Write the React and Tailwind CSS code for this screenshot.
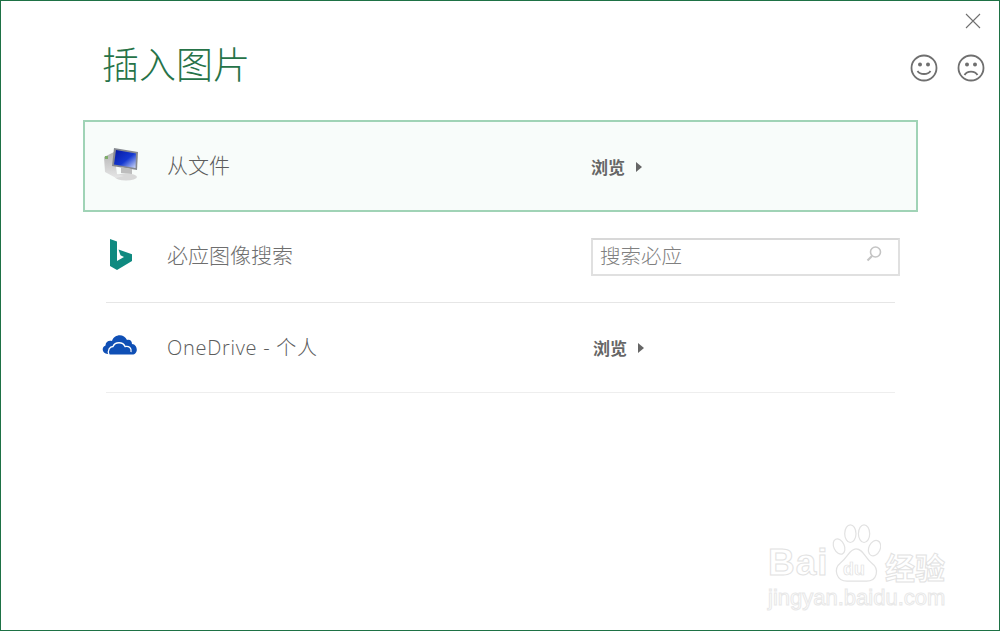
const cjk = { fontFamily: '"Noto Sans CJK SC", sans-serif' };

function PcIcon() {
  return (
    <svg width="38" height="34" viewBox="0 0 38 34" className="shrink-0">
      <defs>
        <linearGradient id="scr" x1="0" y1="0" x2="1" y2="1">
          <stop offset="0" stopColor="#0618a0" />
          <stop offset="0.55" stopColor="#1438d0" />
          <stop offset="1" stopColor="#d5def8" />
        </linearGradient>
        <linearGradient id="tower" x1="0" y1="0" x2="0" y2="1">
          <stop offset="0" stopColor="#b5b5b5" />
          <stop offset="1" stopColor="#e6e6e6" />
        </linearGradient>
      </defs>
      <ellipse cx="23" cy="30" rx="11" ry="3.500" fill="#d8d8d8" />
      <path d="M1 10 L11 5 L14 27 L21 29 L13 31 L2 25 Z" fill="url(#tower)" />
      <path d="M11 1 L35 5 L34 23 L9 19 Z" fill="#85888f" />
      <path d="M13 3 L33 6.500 L32.500 21 L11 17.500 Z" fill="url(#scr)" />
      <path d="M18 20 L29 22 L29 27 L18 26 Z" fill="#bdbdbd" />
      <rect x="2" y="9" width="3" height="3" fill="#7fae6a" />
    </svg>
  );
}

function BingIcon() {
  return (
    <svg width="24" height="33" viewBox="0 0 24 33" className="shrink-0">
      <path d="M1 1 L8 3.500 L8 23 L15 19 L11.500 17.200 L9.500 11.500 L23 16.200 L23 23 L8 32 L1 28 Z" fill="#0f8a80" />
    </svg>
  );
}

function CloudIcon() {
  return (
    <svg width="36" height="23" viewBox="0 0 36 23" className="shrink-0">
      <path d="M7 21 C1 21 0 14 4.500 12.500 C4.500 8.500 8 7 11 8 C13 1 23 0 26 7 C29 6 31 8 31 11 C35 11 36.500 16 35.500 18.500 C34.500 21 33 21.500 31 21.500 L9 21.500 Z" fill="#0f4fb5" />
      <path d="M8 22 C6 17 9 13.500 12 13.500 C14 8.500 22 8.500 24 13.500 C28 12.500 31 15.500 30 19" fill="none" stroke="#fff" strokeWidth="1.300" />
    </svg>
  );
}

function Browse() {
  return (
    <div className="flex items-center gap-[11px]">
      <span className="text-[17px] font-bold text-[#666666]" style={{ fontFamily: '"Noto Sans CJK SC", serif' }}>浏览</span>
      <span className="h-0 w-0 border-y-[5px] border-l-[6px] border-y-transparent border-l-[#666666]" />
    </div>
  );
}

function Watermark() {
  return (
    <div className="pointer-events-none absolute left-[767px] top-[522px] w-[182px] select-none">
      <div className="flex h-[60px] items-end whitespace-nowrap">
        <span className="mb-[2px] w-[63px] text-[37px] font-bold leading-[36px] tracking-[1px] text-white [-webkit-text-stroke:1px_#e2e2e2]" style={{ fontFamily: '"Liberation Sans", sans-serif' }}>Bai</span>
        <svg width="50" height="60" viewBox="0 0 62 74" className="shrink-0">
          <g fill="#fff" stroke="#e2e2e2" strokeWidth="1.500">
            <ellipse cx="10" cy="29" rx="6.500" ry="10" transform="rotate(-25 10 29)" />
            <ellipse cx="24" cy="13" rx="7" ry="11" />
            <ellipse cx="41" cy="13" rx="7" ry="11" />
            <ellipse cx="54" cy="31" rx="7" ry="10" transform="rotate(25 54 31)" />
            <path d="M31 32 C23 32 21 42 12 49 C2 57 7 72 20 72 C28 72 36 72 44 72 C57 72 61 57 50 49 C42 43 40 32 31 32 Z" />
          </g>
          <text x="15" y="64" fontSize="22" fontWeight="700" fontFamily="Liberation Sans" fill="#fff" stroke="#e2e2e2" strokeWidth="0.900">du</text>
        </svg>
        <span className="mb-[1px] ml-[4px] text-[30px] font-bold leading-[32px] text-white [-webkit-text-stroke:1px_#e2e2e2]" style={cjk}>经验</span>
      </div>
      <div className="mt-[3px] text-[22px] leading-[24px] text-white [-webkit-text-stroke:1px_#e8e8e8]" style={{ fontFamily: '"Liberation Sans", sans-serif' }}>jingyan.baidu.com</div>
    </div>
  );
}

export default function App() {
  return (
    <div className="relative h-[631px] w-[1000px] overflow-hidden border border-[#1e7145] bg-white" style={cjk}>
      <div className="flex h-[119px] items-start justify-between">
        <h1 className="ml-[101px] mt-[37px] text-[37px] font-light leading-[50px] text-[#267348]" style={{ fontFamily: '"Noto Sans CJK SC", serif' }}>插入图片</h1>
        <div className="mr-[14px] flex flex-col items-end">
          <svg width="16" height="16" viewBox="0 0 16 16" className="mr-[4px] mt-[12px]">
            <path d="M1 1 L15 15 M15 1 L1 15" stroke="#6f6f6f" strokeWidth="1.100" fill="none" />
          </svg>
          <div className="mt-[25px] flex gap-[19px]">
            <svg width="28" height="28" viewBox="0 0 28 28">
              <circle cx="14" cy="14" r="12.500" fill="none" stroke="#6f6f6f" strokeWidth="1.800" />
              <circle cx="10" cy="10.500" r="2" fill="#6f6f6f" />
              <circle cx="18" cy="10.500" r="2" fill="#6f6f6f" />
              <path d="M7.500 17 C10 21 18 21 20.500 17" fill="none" stroke="#6f6f6f" strokeWidth="1.800" />
            </svg>
            <svg width="28" height="28" viewBox="0 0 28 28">
              <circle cx="14" cy="14" r="12.500" fill="none" stroke="#6f6f6f" strokeWidth="1.800" />
              <circle cx="10" cy="10.500" r="2" fill="#6f6f6f" />
              <circle cx="18" cy="10.500" r="2" fill="#6f6f6f" />
              <path d="M7.500 21 C10 16.500 18 16.500 20.500 21" fill="none" stroke="#6f6f6f" strokeWidth="1.800" />
            </svg>
          </div>
        </div>
      </div>

      <div className="ml-[82px] flex h-[92px] w-[835px] items-center border-2 border-[#a0d3b6] bg-[#f8fcfa]">
        <div className="ml-[18px] mb-[4px] flex w-[64px] items-center"><PcIcon /></div>
        <span className="mb-[3px] text-[21px] font-light text-[#5c5c5c]">从文件</span>
        <div className="ml-auto mr-[274px] mt-[1px]"><Browse /></div>
      </div>

      <div className="ml-[105px] w-[789px]">
        <div className="flex h-[91px] items-center border-b border-[#e6e6e6]">
          <div className="ml-[3px] mb-[5px] flex w-[58px] items-center"><BingIcon /></div>
          <span className="mb-[5px] text-[21px] font-light text-[#6e6e6e]">必应图像搜索</span>
          <div className="ml-auto mb-[1px] mr-[-5px] flex h-[38px] w-[309px] items-center justify-between border-2 border-[#e0e0e0] border-t-[#d8d8d8] pl-[7px] pr-[15px]">
            <span className="mb-[2px] text-[20.500px] font-light text-[#808080]">搜索必应</span>
            <svg width="18" height="18" viewBox="0 0 18 18" className="mb-[6px]">
              <circle cx="10.500" cy="7" r="5" fill="none" stroke="#c4c4c4" strokeWidth="1.600" />
              <path d="M7 11 L2.500 15.500" stroke="#c4c4c4" strokeWidth="2.200" />
            </svg>
          </div>
        </div>
        <div className="flex h-[90px] items-center border-b border-[#eeeeee]">
          <div className="-ml-[5px] mb-[7px] flex w-[66px] items-center"><CloudIcon /></div>
          <span className="mt-[1px] text-[20px] font-light tracking-[0.7px] text-[#5c5c5c]" style={{ fontFamily: '"Open Sans", "Noto Sans CJK SC", sans-serif' }}>OneDrive - 个人</span>
          <div className="ml-auto mr-[251px] mt-[1px]"><Browse /></div>
        </div>
      </div>

      <Watermark />
    </div>
  );
}
